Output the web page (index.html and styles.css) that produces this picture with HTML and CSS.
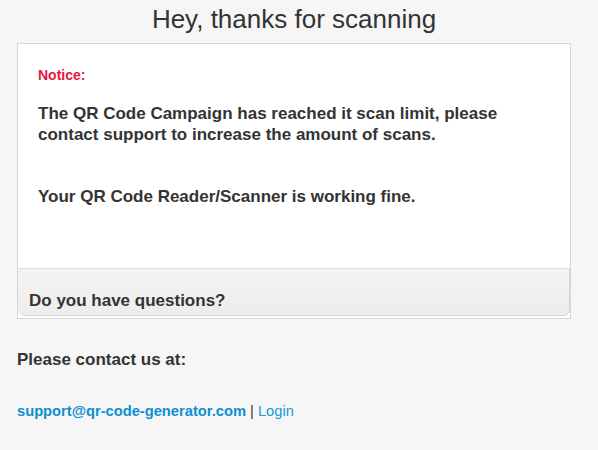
FILE: index.html
```html
<!DOCTYPE html>
<html>
<head>
<meta charset="utf-8">
<link rel="stylesheet" href="styles.css">
</head>
<body>
<div class="page">
  <h1 class="title">Hey, thanks for scanning</h1>
  <div class="card">
    <div class="card-body">
      <p class="notice">Notice:</p>
      <p class="msg">The QR Code Campaign has reached it scan limit, please contact support to increase the amount of scans.</p>
      <p class="msg msg-ok">Your QR Code Reader/Scanner is working fine.</p>
    </div>
    <div class="card-foot">
      <h3 class="foot-title">Do you have questions?</h3>
    </div>
  </div>
  <h3 class="contact">Please contact us at:</h3>
  <p class="links"><a class="mail" href="#">support@qr-code-generator.com</a> | <a class="login" href="#">Login</a></p>
</div>
</body>
</html>
```
FILE: styles.css
```css
html, body {
  margin: 0;
  padding: 0;
  background: #f6f6f6;
  font-family: "Liberation Sans", Arial, sans-serif;
  color: #333;
}
.page {
  width: 554px;
  padding: 0 17px;
}
.title {
  margin: 0;
  padding-top: 4px;
  height: 39px;
  font-size: 26px;
  font-weight: normal;
  line-height: 30px;
  text-align: center;
  color: #333;
}
.card {
  border: 1px solid #d6d6d6;
  background: #fff;
}
.card-body {
  padding: 20px 20px 0 20px;
  height: 204px;
}
.notice {
  margin: 0;
  font-size: 14px;
  font-weight: bold;
  color: #e8173b;
  line-height: 22px;
}
.msg {
  margin: 17px 0 0 0;
  font-size: 17px;
  font-weight: bold;
  line-height: 21px;
  color: #333;
}
.msg-ok {
  margin-top: 41px;
}
.card-foot {
  border-top: 1px solid #dcdcdc;
  border-right: 1px solid #d6d6d6;
  border-bottom: 1px solid #d6d6d6;
  border-radius: 0 0 7px 7px;
  background: linear-gradient(#f4f4f4, #ededed);
  height: 46px;
  padding: 0 11px;
  margin-bottom: 2px;
}
.foot-title {
  margin: 0;
  padding-top: 21px;
  font-size: 17px;
  font-weight: bold;
  line-height: 21px;
  color: #333;
}
.contact {
  margin: 31px 0 0 0;
  font-size: 17px;
  font-weight: bold;
  line-height: 20px;
  color: #333;
}
.links {
  margin: 32px 0 0 0;
  font-size: 14.7px;
  line-height: 18px;
  color: #333;
}
.links a {
  color: #1a9ad6;
  text-decoration: none;
}
.links .mail {
  font-weight: bold;
  color: #0d8fd0;
}
```
